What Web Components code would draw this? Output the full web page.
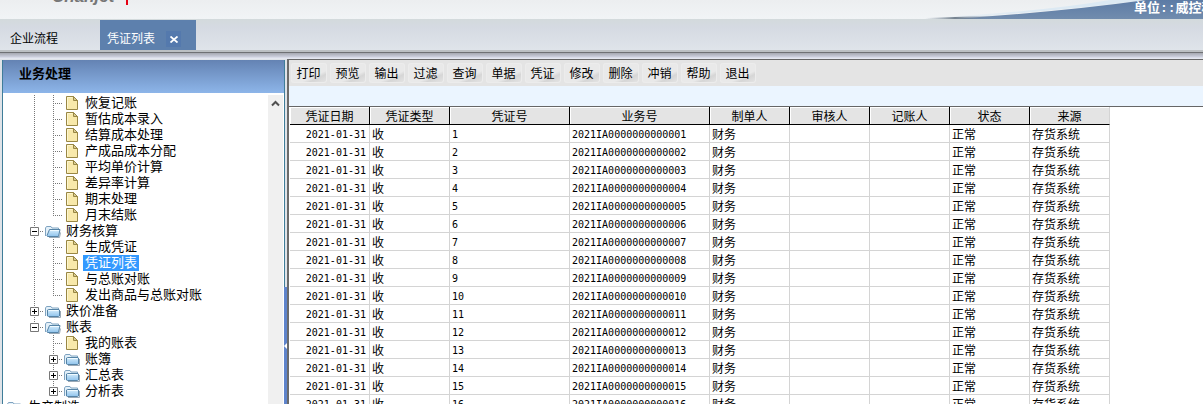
<!DOCTYPE html>
<html lang="zh-CN">
<head>
<meta charset="utf-8">
<title>凭证列表</title>
<style>
  body {
    margin: 0;
    font-family: "Liberation Sans", "Noto Sans CJK SC", sans-serif;
    font-size: 12px;
    color: #000;
  }
</style>
</head>
<body>
<app-shell>
  <app-banner slot="banner" unit="单位::威控科"></app-banner>
  <tab-strip slot="tabs"></tab-strip>
  <side-panel slot="side" heading="业务处理">
    <nav-tree></nav-tree>
  </side-panel>
  <tool-bar slot="main"></tool-bar>
  <voucher-table slot="main"></voucher-table>
</app-shell>

<script>
(function () {
  class BaseComp extends HTMLElement {
    connectedCallback() {
      this._shadowRoot = this.attachShadow({ mode: "open" });
      this._shadowRoot.innerHTML = this.render();
    }
  }

  class AppShell extends BaseComp {
    render() {
      return `
      <style>
        :host { display: flex; flex-direction: column; height: 100vh; overflow: hidden; background: #dfe3e8; }
        .rule { flex: none; height: 9px; background: linear-gradient(#bcc0c3 2px, #6f7174 2px 3px, #a5a8b0 3px, #cdd0de 7px, #e4e7f0 8px); }
        .work { flex: 1; min-height: 0; display: grid; grid-template-columns: 285px 2px 1fr; }
        .side { padding: 1px 0 0 2px; display: grid; min-height: 0; }
        .split { display: flex; flex-direction: column; background: #dfe3e8; }
        .split button {
          margin: 228px 0 0 -1px; padding: 0; border: 0; flex: 1; background: #5f84cb;
          display: flex; align-items: center; justify-content: center;
        }
        main { min-width: 0; min-height: 0; border-left: 2px solid #6b6b6b; border-top: 1px solid #666; background: #fff; overflow: hidden; }
      </style>
      <slot name="banner"></slot>
      <slot name="tabs"></slot>
      <div class="rule"></div>
      <div class="work">
        <div class="side"><slot name="side"></slot></div>
        <div class="split"><button type="button" aria-label="收起">
          <svg width="3" height="6" viewBox="0 0 3 6"><path d="M3 0v6L0 3z" fill="#fff"/></svg>
        </button></div>
        <main><slot name="main"></slot></main>
      </div>`;
    }
  }

  class AppBanner extends BaseComp {
    render() {
      return `
      <style>
        :host { flex: none; display: flex; justify-content: space-between; height: 19px; overflow: hidden; background: linear-gradient(#eceef0, #f1f4f6); }
        .brand { display: flex; align-items: flex-start; padding-left: 52px; }
        .logo { margin-top: -15px; font-size: 17px; line-height: 24px; font-weight: bold; font-style: italic; color: #777; }
        .bar { margin-left: 12px; width: 2px; height: 5px; background: #e60012; }
        .right { position: relative; width: 283px; }
        svg { display: block; }
        .unit {
          position: absolute; left: 214px; top: 1px; white-space: nowrap; color: #fff;
          font: bold 13px/16px "Liberation Mono", "Noto Sans CJK SC", monospace;
        }
      </style>
      <div class="brand"><span class="logo">Chanjet</span><span class="bar"></span></div>
      <div class="right">
        <svg width="283" height="19" viewBox="0 0 283 19">
          <defs>
            <linearGradient id="sea" x2="0" y2="1"><stop stop-color="#5c7ba5"/><stop offset="1" stop-color="#718cae"/></linearGradient>
            <linearGradient id="fade"><stop stop-color="#dce9f3" stop-opacity="0"/><stop offset=".5" stop-color="#dce9f3"/></linearGradient>
            <linearGradient id="edge"><stop stop-color="#7d8a99" stop-opacity="0"/><stop offset=".4" stop-color="#75828f"/><stop offset="1" stop-color="#718cae" stop-opacity="0"/></linearGradient>
          </defs>
          <path d="M5 18Q120 12 190 0h36Q140 11 25 19H5z" fill="url(#fade)"/>
          <path d="M30 19Q140 12 226 0h57v19z" fill="url(#sea)"/>
          <path d="M5 18l45-1.500 30-1v3.500H5z" fill="url(#edge)"/>
        </svg>
        <span class="unit">${this.getAttribute("unit")}</span>
      </div>`;
    }
  }

  class TabStrip extends BaseComp {
    render() {
      return `
      <style>
        :host { flex: none; display: flex; height: 30px; padding-top: 1px; background: linear-gradient(#d3dadc, #d5dae2 8px, #dfe4ea); }
        .tab { display: flex; align-items: center; height: 30px; box-sizing: border-box; padding: 8px 0 0 10px; width: 100px; }
        .active { width: 96px; padding-left: 7px; gap: 11px; background: #5d80ad; color: #fff; }
        button { border: 0; padding: 0; background: none; font: inherit; color: inherit; line-height: 16px; }
        .close { width: 15px; height: 16px; background: #5479ad; }
        svg { display: block; margin: 0 auto; }
      </style>
      <div class="tab"><button type="button">企业流程</button></div>
      <div class="tab active">
        <button type="button">凭证列表</button>
        <button type="button" class="close" aria-label="关闭">
          <svg width="8" height="7" viewBox="0 0 8 7"><path d="M.5.5l7 6M7.500.5l-7 6" stroke="#fff" stroke-width="1.800"/></svg>
        </button>
      </div>`;
    }
  }

  class SidePanel extends BaseComp {
    render() {
      return `
      <style>
        :host { display: flex; flex-direction: column; min-height: 0; border: solid #3f7d99; border-width: 0 1px; background: #fff; }
        h2 {
          flex: none; margin: 0; padding: 0 0 4px 16px; height: 29px;
          background: linear-gradient(#6483b3, #8db5e9); font-size: 13px; line-height: 28px;
        }
        .body { flex: 1; min-height: 0; display: flex; padding-top: 2px; }
        .content { flex: 1; min-width: 0; overflow: hidden; }
        .scroll { width: 15px; margin-right: 1px; background: #f0f0f0; }
        .scroll button { display: block; width: 15px; height: 17px; border: 0; padding: 0; background: none; }
        svg { display: block; margin: 0 auto; }
      </style>
      <h2>${this.getAttribute("heading")}</h2>
      <div class="body">
        <div class="content"><slot></slot></div>
        <div class="scroll"><button type="button" aria-label="向上">
          <svg width="9" height="7" viewBox="0 0 9 7"><path d="M1 5.500L4.500 2 8 5.500" fill="none" stroke="#505050" stroke-width="2"/></svg>
        </button></div>
      </div>`;
    }
  }

  // label, icon, then one guide cell per level
  const nodes = [
    ["恢复记账", "page", "line", "tee"],
    ["暂估成本录入", "page", "line", "tee"],
    ["结算成本处理", "page", "line", "tee"],
    ["产成品成本分配", "page", "line", "tee"],
    ["平均单价计算", "page", "line", "tee"],
    ["差异率计算", "page", "line", "tee"],
    ["期末处理", "page", "line", "tee"],
    ["月末结账", "page", "line", "end"],
    ["财务核算", "open", "minus"],
    ["生成凭证", "page", "line", "tee"],
    ["凭证列表", "page", "line", "tee"],
    ["与总账对账", "page", "line", "tee"],
    ["发出商品与总账对账", "page", "line", "end"],
    ["跌价准备", "folder", "plus"],
    ["账表", "open", "minus last"],
    ["我的账表", "page", "none", "tee"],
    ["账簿", "folder", "none", "plus"],
    ["汇总表", "folder", "none", "plus"],
    ["分析表", "folder", "none", "plus last"],
    ["生产制造", "folder"]
  ];

  const folderBack = `
    <defs><linearGradient id="f" x2="0" y2="1"><stop stop-color="#d6edfb"/><stop offset="1" stop-color="#8fc3ec"/></linearGradient></defs>
    <path d="M.5 11V3l1-1.500h4.500l1 1.500h6.500V5.500" fill="#e3f0f9" stroke="#7fa3c0"/>`;
  const icons = {
    page: `<svg width="12" height="14" viewBox="0 0 12 14">
      <path d="M.5.5h7l4 4v9H.5z" fill="#f8e9ab" stroke="#998744"/>
      <path d="M1.500 12.500v-11h5" fill="none" stroke="#fdf6cf"/>
      <path d="M7.500.5v4h4z" fill="#d8cc94" stroke="#998744"/></svg>`,
    folder: `<svg width="16" height="13" viewBox="0 0 16 13">${folderBack}
      <path d="M4 12.500h11.500V6" fill="none" stroke="#9aa9b6"/>
      <path d="M2.500 5l1-.5h10.500l.5.5v6l-1 .5h-10l-1-.5z" fill="url(#f)" stroke="#5583a6"/>
      <path d="M3.500 5.500h10" stroke="#effaff"/></svg>`,
    open: `<svg width="16" height="13" viewBox="0 0 16 13">${folderBack}
      <path d="M4 12.500h10.500l1-5" fill="none" stroke="#9aa9b6"/>
      <path d="M4.500 4.500h10.500l-1.500 7h-11l-.5-1z" fill="url(#f)" stroke="#5583a6"/>
      <path d="M5 5.500h9" stroke="#effaff"/></svg>`
  };

  class NavTree extends BaseComp {
    renderNode([label, icon, ...guides]) {
      const cells = guides.map((g) => {
        const sign = g.startsWith("plus") ? "M2 4.500h5M4.500 2v5" : g.startsWith("minus") ? "M2 4.500h5" : "";
        const box = sign
          ? `<svg width="9" height="9" viewBox="0 0 9 9"><path d="M.5.5h8v8h-8z" fill="#fff" stroke="#777"/><path d="${sign}" stroke="#000"/></svg>`
          : "";
        return `<span class="guide ${g}">${box}</span>`;
      }).join("");
      const cur = label === "凭证列表" ? ` aria-current="page"` : "";
      const cls = guides.length ? ` class="sub"` : "";
      return `<li${cls}>${cells}<span class="icon ${icon}">${icons[icon]}</span><a href="#"${cur}>${label}</a></li>`;
    }

    render() {
      return `
      <style>
        :host { display: block; }
        ul { margin: 0; padding: 0 0 0 3px; list-style: none; }
        li { display: flex; height: 16px; }
        .sub { padding-left: 19px; }
        .guide {
          --v: repeating-linear-gradient(#777 0 1px, transparent 1px 2px);
          --h: repeating-linear-gradient(90deg, #777 0 1px, transparent 1px 2px);
          width: 19px; background-repeat: no-repeat; display: flex; align-items: center; justify-content: center;
        }
        .guide.line { background-image: var(--v); background-position: 9px 0; background-size: 1px 16px; }
        .guide.tee, .guide.plus, .guide.minus {
          background-image: var(--v), var(--h); background-position: 9px 0, 9px 8px; background-size: 1px 16px, 10px 1px;
        }
        .guide.end, .guide.last { background-image: var(--v), var(--h); background-position: 9px 0, 9px 8px; background-size: 1px 8px, 10px 1px; }
        .icon { box-sizing: border-box; width: 20px; padding-left: 1px; display: flex; align-items: center; }
        .page { padding-left: 3px; }
        a { padding: 0 2px; font-size: 13px; line-height: 16px; color: #000; text-decoration: none; white-space: nowrap; }
        a[aria-current] { background: #3399ff; color: #fff; }
      </style>
      <ul>${nodes.map((n) => this.renderNode(n)).join("")}</ul>`;
    }
  }

  class ToolBar extends BaseComp {
    render() {
      const names = ["打印", "预览", "输出", "过滤", "查询", "单据", "凭证", "修改", "删除", "冲销", "帮助", "退出"];
      return `
      <style>
        :host { display: block; background: #e4e4e4; border-bottom: 1px solid #666; }
        .buttons { display: flex; gap: 3px; padding: 3px 2px; }
        .strip { height: 20px; background: #ebf5ff; }
        button {
          width: 36px; height: 20px; padding: 3px 1px 0 0; border: 0; border-radius: 3px; font: inherit; line-height: 17px;
          background: linear-gradient(155deg, #e9e9e9 65%, #d6d6d6 75%, #e6e6e6);
          box-shadow: inset 0 0 0 1px #ececec;
        }
      </style>
      <div class="buttons">${names.map((n) => `<button type="button">${n}</button>`).join("")}</div>
      <div class="strip"></div>`;
    }
  }

  class VoucherTable extends BaseComp {
    constructor() {
      super();
      this._camps = [
        { header: "凭证日期", width: 80, cls: "num right", value: () => "2021-01-31" },
        { header: "凭证类型", width: 80, value: () => "收" },
        { header: "凭证号", width: 120, cls: "num", value: (i) => i },
        { header: "业务号", width: 140, cls: "num", value: (i) => "2021IA" + String(i).padStart(13, "0") },
        { header: "制单人", width: 80, value: () => "财务" },
        { header: "审核人", width: 80, value: () => "" },
        { header: "记账人", width: 80, value: () => "" },
        { header: "状态", width: 80, value: () => "正常" },
        { header: "来源", width: 80, value: () => "存货系统" }
      ];
    }

    render() {
      let rows = "";
      for (let i = 1; i <= 16; i++) {
        rows += `<tr>${this._camps.map((c) => `<td class="${c.cls || ""}">${c.value(i)}</td>`).join("")}</tr>`;
      }
      return `
      <style>
        :host { display: block; padding-left: 1px; }
        table { width: 820px; table-layout: fixed; border-collapse: separate; border-spacing: 0; }
        th, td { box-sizing: border-box; height: 18px; line-height: 14px; white-space: nowrap; overflow: hidden; }
        th {
          padding: 3px 0 0; font-weight: normal; background: #e4e4e4;
          border: solid #000; border-width: 0 1px 1px 0; box-shadow: inset 1px 1px #fff;
        }
        th:last-child { border-right-color: #d4d4d4; }
        td { padding: 3px 3px 0 2px; border: solid #d4d4d4; border-width: 0 1px 1px 0; }
        .num { font-family: "DejaVu Sans Mono", "Liberation Mono", monospace; font-size: 10px; }
        .right { text-align: right; }
      </style>
      <table>
        <colgroup>${this._camps.map((c) => `<col style="width:${c.width}px">`).join("")}</colgroup>
        <thead><tr>${this._camps.map((c) => `<th scope="col">${c.header}</th>`).join("")}</tr></thead>
        <tbody>${rows}</tbody>
      </table>`;
    }
  }

  customElements.define("app-shell", AppShell);
  customElements.define("app-banner", AppBanner);
  customElements.define("tab-strip", TabStrip);
  customElements.define("side-panel", SidePanel);
  customElements.define("nav-tree", NavTree);
  customElements.define("tool-bar", ToolBar);
  customElements.define("voucher-table", VoucherTable);
})();
</script>
</body>
</html>
